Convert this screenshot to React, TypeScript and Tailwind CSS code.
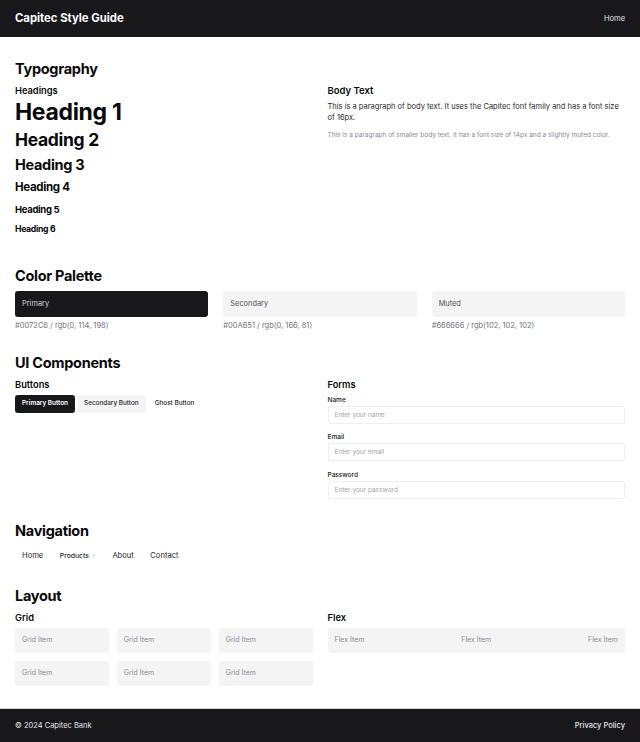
import { ChevronDown } from 'lucide-react';

const dark = 'bg-[#18181b]';

function Swatch({ name, label, primary }: { name: string; label: string; primary?: boolean }) {
  return (
    <div>
      <div
        className={`h-[26px] rounded-[3px] px-[7px] flex items-center text-[7.4px] ${
          primary ? `${dark} text-[#d4d4d8]` : 'bg-[#f4f4f5] text-[#52525b]'
        }`}
      >
        {name}
      </div>
      <p className="mt-[4px] text-[7.5px] leading-[10px] text-[#71717a]">{label}</p>
    </div>
  );
}

function Field({ label, placeholder, type = 'text' }: { label: string; placeholder: string; type?: string }) {
  return (
    <div className="mb-[9.5px]">
      <label className="block text-[6.5px] leading-[9px] font-medium text-[#18181b]">{label}</label>
      <input
        type={type}
        placeholder={placeholder}
        className="mt-[1px] block w-full h-[18px] px-[6px] text-[6.5px] border border-[#f0f0f2] rounded-[2px] placeholder:text-[#a1a1aa] outline-none"
      />
    </div>
  );
}

export default function App() {
  const gridItems = Array.from({ length: 6 });

  return (
    <div className="min-h-screen bg-white text-[#09090b]" style={{ fontFamily: 'Inter, "Noto Sans", sans-serif' }}>
      <header className={`${dark} h-[37px] px-[15px] flex items-center justify-between`}>
        <h1 className="text-[11.3px] font-bold text-white">Capitec Style Guide</h1>
        <a className="text-[7.5px] text-[#e4e4e7]">Home</a>
      </header>

      <main className="px-[15px] pt-[22px] pb-[22px]">
        {/* Typography */}
        <section>
          <h2 className="text-[14.5px] leading-[20px] font-bold tracking-[-0.02em]">Typography</h2>
          <div className="mt-[6px] grid grid-cols-2 gap-x-[15px]">
            <div className="tracking-[-0.02em]">
              <h3 className="text-[9.3px] leading-[12px] font-semibold tracking-normal">Headings</h3>
              <div className="mt-[1px] text-[23px] leading-[28px] font-bold">Heading 1</div>
              <div className="mt-[3px] text-[17.5px] leading-[22px] font-bold">Heading 2</div>
              <div className="mt-[5px] text-[14.5px] leading-[18px] font-bold">Heading 3</div>
              <div className="mt-[6px] text-[11.5px] leading-[15px] font-bold">Heading 4</div>
              <div className="mt-[8px] text-[9.5px] leading-[13px] font-bold">Heading 5</div>
              <div className="mt-[7px] text-[8.7px] leading-[12px] font-bold">Heading 6</div>
            </div>
            <div>
              <h3 className="text-[9.5px] leading-[12px] font-semibold">Body Text</h3>
              <p className="mt-[5px] text-[7.5px] leading-[10.7px] text-[#27272a]">
                This is a paragraph of body text. It uses the Capitec font family and has a font size of 16px.
              </p>
              <p className="mt-[7.5px] text-[6.5px] leading-[9px] text-[#8a8a93]">
                This is a paragraph of smaller body text. It has a font size of 14px and a slightly muted color.
              </p>
            </div>
          </div>
        </section>

        {/* Color Palette */}
        <section className="mt-[30.5px]">
          <h2 className="text-[14.5px] leading-[20px] font-bold tracking-[-0.02em]">Color Palette</h2>
          <div className="mt-[5px] grid grid-cols-3 gap-x-[15px]">
            <Swatch name="Primary" label="#0072C6 / rgb(0, 114, 198)" primary />
            <Swatch name="Secondary" label="#00A651 / rgb(0, 166, 81)" />
            <Swatch name="Muted" label="#666666 / rgb(102, 102, 102)" />
          </div>
        </section>

        {/* UI Components */}
        <section className="mt-[22px]">
          <h2 className="text-[14.5px] leading-[20px] font-bold tracking-[-0.02em]">UI Components</h2>
          <div className="mt-[6px] grid grid-cols-2 gap-x-[15px]">
            <div>
              <h3 className="text-[9.3px] leading-[12px] font-semibold">Buttons</h3>
              <div className="mt-[4px] flex gap-[2px]">
                <button className={`${dark} h-[18px] px-[7px] rounded-[3px] text-[6.4px] font-semibold text-white`}>
                  Primary Button
                </button>
                <button className="bg-[#f4f4f5] h-[18px] px-[7px] rounded-[3px] text-[6.4px] font-medium text-[#27272a]">
                  Secondary Button
                </button>
                <button className="h-[18px] px-[7px] rounded-[3px] text-[6.4px] font-medium text-[#27272a]">
                  Ghost Button
                </button>
              </div>
            </div>
            <div>
              <h3 className="text-[9.3px] leading-[12px] font-semibold">Forms</h3>
              <form className="mt-[5px]">
                <Field label="Name" placeholder="Enter your name" />
                <Field label="Email" placeholder="Enter your email" type="email" />
                <Field label="Password" placeholder="Enter your password" type="password" />
              </form>
            </div>
          </div>
        </section>

        {/* Navigation */}
        <section className="mt-[13px]">
          <h2 className="text-[14.5px] leading-[20px] font-bold tracking-[-0.02em]">Navigation</h2>
          <nav className="mt-[8.5px] flex gap-[2.5px] text-[7.6px] leading-[12px] text-[#27272a]">
            <a className="px-[7px]">Home</a>
            <a className="px-[7px] flex items-center gap-[2px] text-[6.8px] font-medium">
              Products <ChevronDown size={5} strokeWidth={2} className="text-[#71717a]" />
            </a>
            <a className="px-[7px]">About</a>
            <a className="px-[7px]">Contact</a>
          </nav>
        </section>

        {/* Layout */}
        <section className="mt-[24.5px]">
          <h2 className="text-[14.5px] leading-[20px] font-bold tracking-[-0.02em]">Layout</h2>
          <div className="mt-[6px] grid grid-cols-2 gap-x-[15px]">
            <div>
              <h3 className="text-[9.3px] leading-[12px] font-semibold">Grid</h3>
              <div className="mt-[4px] grid grid-cols-3 gap-[8px]">
                {gridItems.map((_, i) => (
                  <div
                    key={i}
                    className="h-[25px] rounded-[3px] bg-[#f4f4f5] px-[7px] flex items-center text-[7px] text-[#8a8a93]"
                  >
                    Grid Item
                  </div>
                ))}
              </div>
            </div>
            <div>
              <h3 className="text-[9.3px] leading-[12px] font-semibold">Flex</h3>
              <div className="mt-[4px] h-[25px] rounded-[3px] bg-[#f4f4f5] px-[7px] flex items-center justify-between text-[7px] text-[#8a8a93]">
                <span>Flex Item</span>
                <span>Flex Item</span>
                <span>Flex Item</span>
              </div>
            </div>
          </div>
        </section>
      </main>

      <footer className={`${dark} h-[34px] px-[15px] flex items-center justify-between border-t border-[#d4d4d8]`}>
        <p className="text-[7.5px] text-[#e4e4e7]">© 2024 Capitec Bank</p>
        <a className="text-[7.5px] font-medium text-[#e4e4e7]">Privacy Policy</a>
      </footer>
    </div>
  );
}
